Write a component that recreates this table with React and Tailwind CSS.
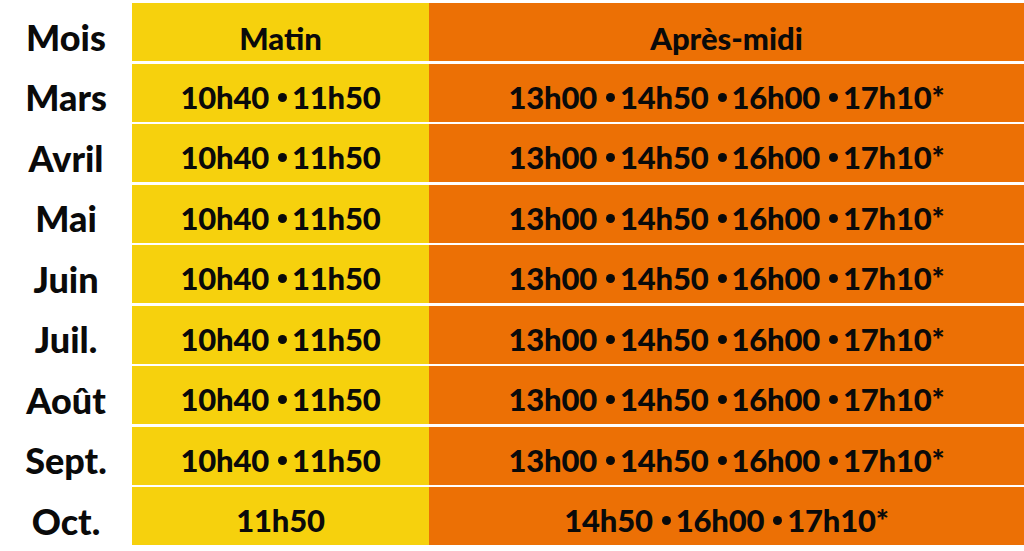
const full = ["13h00", "14h50", "16h00", "17h10*"];
const rows = [
  { mois: "Mars", matin: ["10h40", "11h50"], aprem: full },
  { mois: "Avril", matin: ["10h40", "11h50"], aprem: full },
  { mois: "Mai", matin: ["10h40", "11h50"], aprem: full },
  { mois: "Juin", matin: ["10h40", "11h50"], aprem: full },
  { mois: "Juil.", matin: ["10h40", "11h50"], aprem: full },
  { mois: "Août", matin: ["10h40", "11h50"], aprem: full },
  { mois: "Sept.", matin: ["10h40", "11h50"], aprem: full },
  { mois: "Oct.", matin: ["11h50"], aprem: ["14h50", "16h00", "17h10*"] },
];

function Times({ list }) {
  return (
    <span className="flex items-center">
      {list.map((t, i) => (
        <span key={t} className="flex items-center">
          {i > 0 && <span className="inline-block w-[9px] h-[9px] rounded-full bg-[#0a0a0a] ml-[9px] mr-[5px]" />}
          {t}
        </span>
      ))}
    </span>
  );
}

export default function App() {
  return (
    <div className="w-[1024px] h-[551px] bg-white pt-[3px] font-['Lato',sans-serif] font-black text-[#0a0a0a]">
      <div className="grid grid-cols-[132px_297px_1fr] gap-y-[2.5px]">
        {/* header */}
        <div className="h-[58px] pt-[9px] flex items-center justify-center text-[36px]">Mois</div>
        <div className="h-[58px] pt-[13px] flex items-center justify-center bg-[#f6d10d] text-[31px]">Matin</div>
        <div className="h-[58px] pt-[13px] flex items-center justify-center bg-[#ec7005] text-[31px]">Après-midi</div>

        {rows.map((r) => (
          <div key={r.mois} className="contents">
            <div className="h-[58px] pt-[9px] flex items-center justify-center text-[36px]">{r.mois}</div>
            <div className="h-[58px] pt-[9px] flex items-center justify-center bg-[#f6d10d] text-[31px] tracking-[-0.2px]">
              <Times list={r.matin} />
            </div>
            <div className="h-[58px] pt-[9px] flex items-center justify-center bg-[#ec7005] text-[31px] tracking-[-0.2px]">
              <Times list={r.aprem} />
            </div>
          </div>
        ))}
      </div>
    </div>
  );
}
